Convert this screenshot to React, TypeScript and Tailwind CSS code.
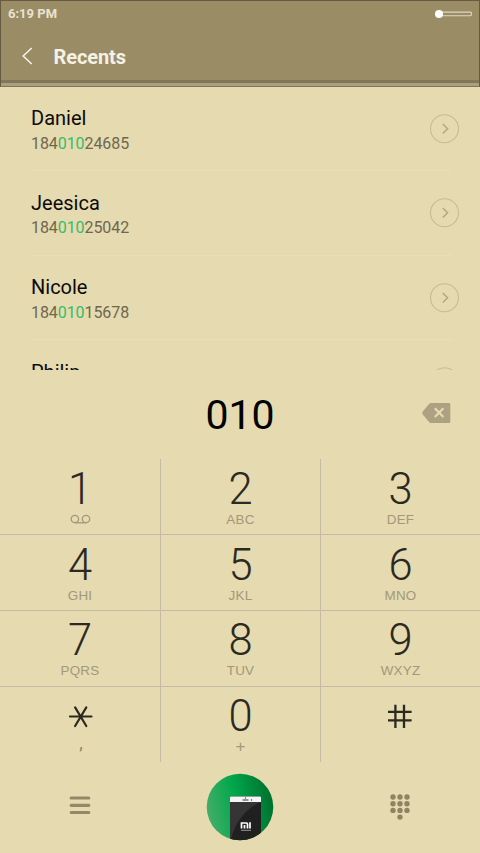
interface Contact {
  name: string;
  before: string;
  match: string;
  after: string;
}

interface DialKey {
  digit: string;
  letters: string;
}

const contacts: Contact[] = [
  { name: "Daniel", before: "184", match: "010", after: "24685" },
  { name: "Jeesica", before: "184", match: "010", after: "25042" },
  { name: "Nicole", before: "184", match: "010", after: "15678" },
  { name: "Philip", before: "184", match: "010", after: "13579" },
];

const keys: DialKey[] = [
  { digit: "1", letters: "" },
  { digit: "2", letters: "ABC" },
  { digit: "3", letters: "DEF" },
  { digit: "4", letters: "GHI" },
  { digit: "5", letters: "JKL" },
  { digit: "6", letters: "MNO" },
  { digit: "7", letters: "PQRS" },
  { digit: "8", letters: "TUV" },
  { digit: "9", letters: "WXYZ" },
  { digit: "*", letters: "," },
  { digit: "0", letters: "+" },
  { digit: "#", letters: "" },
];

function Header() {
  return (
    <header className="h-[87px] shrink-0 bg-[#9a8d65] border border-[#655a42] border-b-[#817656] flex flex-col text-[#f5f1e6]">
      <div className="h-[25px] pl-[7px] pr-[6px] flex items-center justify-between">
        <span className="text-[13px] leading-none font-bold text-[#e9e3d2]">6:19 PM</span>
        <svg width="38" height="10" viewBox="0 0 38 10" fill="none">
          <rect x="4" y="3.1" width="32.5" height="3.6" rx="1.2" stroke="#ddd6c2" strokeWidth="1.1" />
          <circle cx="4" cy="4.9" r="4" fill="#ffffff" />
        </svg>
      </div>
      <div className="h-[54px] pt-[6px] pl-[20px] flex items-center">
        <svg width="12" height="18" viewBox="0 0 12 18" fill="none">
          <path d="M10.7 1 L2.2 9 L10.7 17" stroke="#f7f4ea" strokeWidth="1.5" />
        </svg>
        <h1 className="ml-[20.5px] pt-[2px] text-[20px] leading-none font-bold tracking-[-0.1px]">Recents</h1>
      </div>
      <div className="h-[3px] bg-[#817658]" />
      <div className="h-[3px] bg-[#aaa07d]" />
    </header>
  );
}

function ContactRow({ contact }: { contact: Contact }) {
  return (
    <li className="h-[84.4px] shrink-0 pl-[31px] pr-[28px]">
      <div className="h-full flex justify-between border-b border-[#e9deba]">
        <div className="pt-[19.4px]">
          <p className="text-[20px] leading-6 text-[#0c0b08]">{contact.name}</p>
          <p className="mt-[1.5px] text-[16px] leading-6 tracking-[-0.08px] text-[#6f674e]">
            {contact.before}
            <span className="text-[#36bd69]">{contact.match}</span>
            {contact.after}
          </p>
        </div>
        <svg className="-mr-[8px] mt-[27px]" width="30" height="30" viewBox="0 0 30 30" fill="none">
          <circle cx="14.5" cy="14.8" r="14" stroke="#c8bc92" strokeWidth="1.1" />
          <path d="M12.8 10 L17.6 14.8 L12.8 19.6" stroke="#b1a680" strokeWidth="1.4" />
        </svg>
      </div>
    </li>
  );
}

function Digit({ digit }: { digit: string }) {
  if (digit === "*") {
    return (
      <svg className="shrink-0" width="26" height="44" viewBox="0 0 26 44" fill="none" stroke="#2c2921" strokeWidth="2.2" strokeLinecap="round">
        <path d="M3 21.5 H24.5 M8.1 12.4 L19.3 31 M19.3 12.4 L8.1 31" />
      </svg>
    );
  }
  if (digit === "#") {
    return (
      <svg className="shrink-0" width="26" height="44" viewBox="0 0 26 44" fill="none" stroke="#2c2921" strokeWidth="2.3">
        <path d="M7.4 9.7 V32.9 M16 9.7 V32.9 M0 16.9 H23.6 M0 25.4 H23.6" />
      </svg>
    );
  }
  return <span className="text-[43.5px] leading-[44px] font-light text-[#2c2921]">{digit}</span>;
}

function Key({ item }: { item: DialKey }) {
  return (
    <button className="pt-[9px] nth-[n+7]:pt-[8px] nth-[n+10]:pt-[7px] flex flex-col items-center border-[#c5bba5] border-r border-b nth-[3n]:border-r-0 nth-[n+10]:border-b-0">
      <Digit digit={item.digit} />
      {item.digit === "1" ? (
        <svg className="mt-[2px] ml-px shrink-0" width="21" height="11" viewBox="0 0 21 11" fill="none" stroke="#a2987a" strokeWidth="1.3">
          <circle cx="4.9" cy="5" r="3.7" />
          <circle cx="16" cy="5" r="3.7" />
          <path d="M4.9 8.8 H16" />
        </svg>
      ) : item.digit === "*" ? (
        <span className="-mt-[4px] ml-[2px] text-[18px] leading-4 text-[#8e8468]">{item.letters}</span>
      ) : item.digit === "0" ? (
        <span className="font-['Liberation_Sans',sans-serif] text-[17px] leading-4 text-[#a2987a]">{item.letters}</span>
      ) : (
        <span className="font-['Liberation_Sans',sans-serif] text-[13.4px] leading-4 tracking-[0.25px] text-[#a2987a]">
          {item.letters}
        </span>
      )}
    </button>
  );
}

function CallButton() {
  return (
    <svg className="-mt-[2px]" width="68" height="68" viewBox="0 0 68 68">
      <defs>
        <linearGradient id="green" x1="0" y1="0.6" x2="1" y2="0.4">
          <stop offset="0" stopColor="#48ad6b" />
          <stop offset="0.45" stopColor="#00a84c" />
          <stop offset="1" stopColor="#006e2e" />
        </linearGradient>
        <clipPath id="round">
          <circle cx="34" cy="34" r="33.3" />
        </clipPath>
      </defs>
      <g clipPath="url(#round)">
        <rect width="68" height="68" fill="url(#green)" />
        <rect x="24" y="23.5" width="31" height="46" rx="1" fill="#202020" />
        <path d="M24 29 H55 C42 34 30 47 25 66 H24 Z" fill="#353535" />
        <path d="M24 29 V24.5 Q24 23.5 25 23.5 H54 Q55 23.5 55 24.5 V29 Z" fill="#f5f5f5" />
        <path d="M36.5 27 H42.5" stroke="#333333" strokeWidth="1.2" />
        <circle cx="39.5" cy="25" r="0.7" fill="#555555" />
        <circle cx="45.5" cy="27" r="0.7" fill="#333333" />
        <path d="M35.5 55.5 V50 H40.5 Q41.5 50 41.5 51 V55.5 M38.5 52 V55.5 M44 49.3 V55.5" fill="none" stroke="#ffffff" strokeWidth="1.7" />
        <path d="M35 57.3 H45" stroke="#999999" strokeWidth="1" />
      </g>
    </svg>
  );
}

const dots = [
  [3, 3], [10, 3], [17, 3],
  [3, 9.7], [10, 9.7], [17, 9.7],
  [3, 16.4], [10, 16.4], [17, 16.4],
  [10, 23.1],
];

export default function App() {
  return (
    <div className="w-[480px] h-[853px] overflow-hidden bg-[#e5dab0] flex flex-col font-[Roboto,sans-serif]">
      <Header />

      <ul className="h-[283px] shrink-0 overflow-hidden flex flex-col">
        {contacts.map((contact) => (
          <ContactRow key={contact.name} contact={contact} />
        ))}
      </ul>

      <section className="h-[89px] shrink-0 grid grid-cols-3 items-center">
        <p className="col-start-2 pt-px text-center text-[41px] leading-none text-black">010</p>
        <svg className="justify-self-end mr-[29.5px] -mt-[3px]" width="30" height="22" viewBox="0 0 30 22">
          <path d="M10 1 H28 Q29.3 1 29.3 2.3 V19.7 Q29.3 21 28 21 H10 Q9 21 8.2 20.2 L1.8 12.5 Q0.7 11 1.8 9.5 L8.2 1.8 Q9 1 10 1 Z" fill="#aca282" />
          <path d="M13.8 6.3 L22.4 15 M22.4 6.3 L13.8 15" stroke="#e5dab0" strokeWidth="2.2" />
        </svg>
      </section>

      <section className="h-[303px] shrink-0 grid grid-cols-[161px_160px_159px] grid-rows-[76px_76px_76px_75px]">
        {keys.map((item) => (
          <Key key={item.digit} item={item} />
        ))}
      </section>

      <footer className="h-[91px] grid grid-cols-3 items-center justify-items-center">
        <svg className="-mt-[5px]" width="22" height="20" viewBox="0 0 22 20" stroke="#938969" strokeWidth="3.2" strokeLinecap="round">
          <path d="M2.2 3 H19.8 M2.2 10.3 H19.8 M2.2 17.5 H19.8" />
        </svg>
        <CallButton />
        <svg className="-mt-px mr-px" width="20" height="26" viewBox="0 0 20 26" fill="#8e8464">
          {dots.map(([x, y]) => (
            <circle key={`${x}-${y}`} cx={x} cy={y} r="2.7" />
          ))}
        </svg>
      </footer>
    </div>
  );
}
